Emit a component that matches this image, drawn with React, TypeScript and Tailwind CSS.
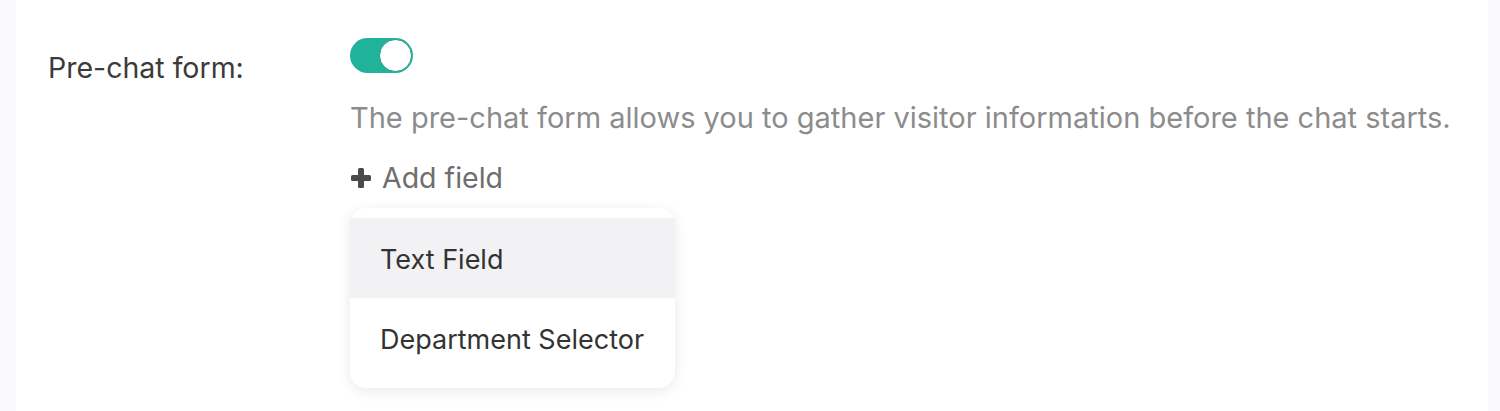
import React, { useState } from "react";

function PlusIcon() {
  return (
    <svg width="22" height="22" viewBox="0 0 22 22" className="shrink-0">
      <rect x="8" y="1" width="6" height="20" rx="1.5" fill="#4b4b4b" />
      <rect x="1" y="8" width="20" height="6" rx="1.5" fill="#4b4b4b" />
    </svg>
  );
}

export default function App() {
  const [enabled, setEnabled] = useState(true);
  const fields = ["Text Field", "Department Selector"];

  return (
    <div
      className="flex w-full h-[411px] bg-[#f9f9fc]"
      style={{ fontFamily: "Inter, 'Noto Sans', sans-serif" }}
    >
      <div className="ml-[16px] w-[1472px] bg-white flex pt-[38px] pl-[32px]">
        <div className="w-[302px] shrink-0 pt-[12px] text-[28.5px] leading-[36px] text-[#3b3b3b]">
          Pre-chat form:
        </div>
        <div className="flex flex-col items-start">
          <button
            onClick={() => setEnabled(!enabled)}
            className={`w-[63px] h-[35px] rounded-full flex items-center px-[1px] ${
              enabled ? "bg-[#20b29b] justify-end" : "bg-gray-300 justify-start"
            }`}
          >
            <span className="w-[33px] h-[33px] rounded-full bg-white border border-[#1d9c88]" />
          </button>
          <p className="mt-[27px] text-[29px] leading-[36px] text-[#8c8c8c] whitespace-nowrap">
            The pre-chat form allows you to gather visitor information before the chat starts.
          </p>
          <div className="mt-[24px] flex items-center gap-[10px] text-[28.5px] leading-[36px] text-[#6e6e6e]">
            <PlusIcon />
            <span>Add field</span>
          </div>
          <ul className="mt-[12px] w-[325px] rounded-[16px] bg-white py-[10px] shadow-[0_3px_14px_rgba(0,0,0,0.09)]">
            {fields.map((f, i) => (
              <li
                key={f}
                className={`h-[80px] flex items-center pl-[30px] pt-[5px] text-[27px] text-[#333333] ${
                  i === 0 ? "bg-[#f2f1f4]" : ""
                }`}
              >
                {f}
              </li>
            ))}
          </ul>
        </div>
      </div>
    </div>
  );
}
